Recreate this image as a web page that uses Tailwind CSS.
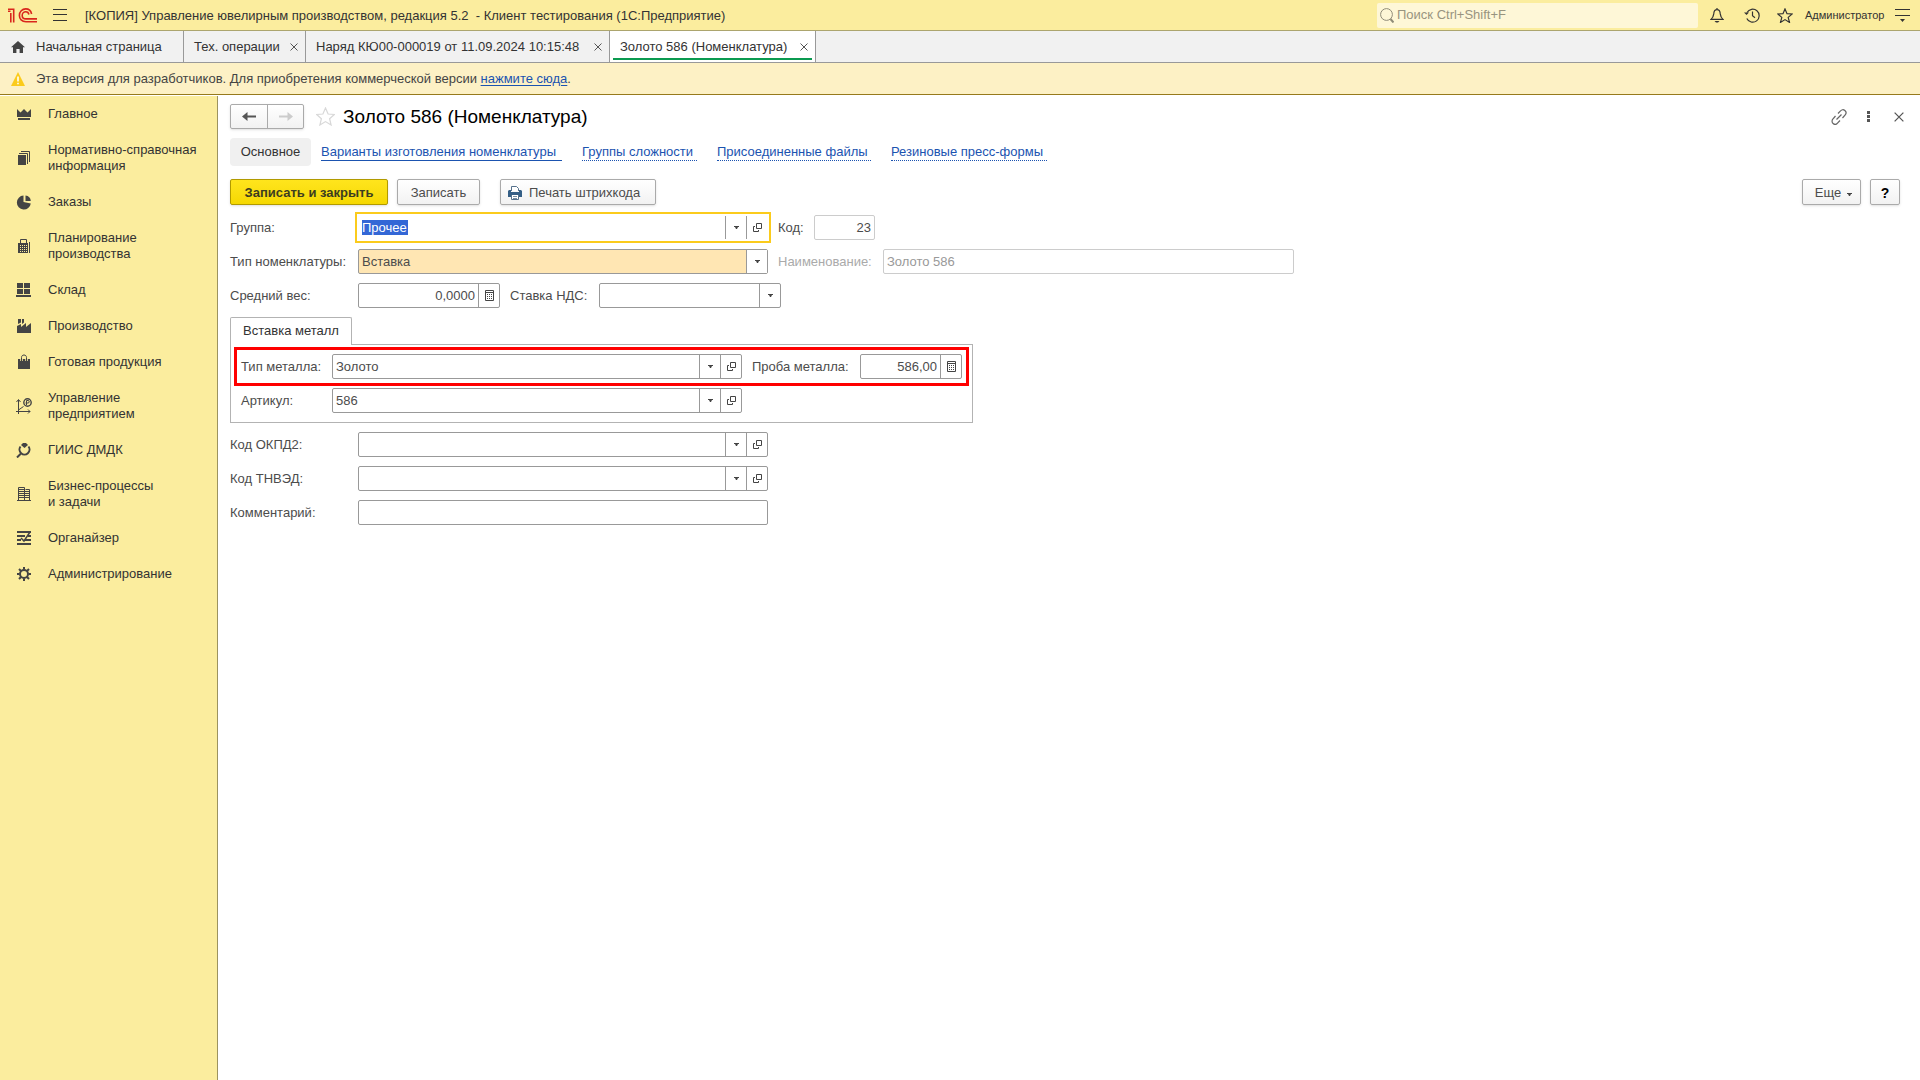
<!DOCTYPE html>
<html lang="ru">
<head>
<meta charset="utf-8">
<title>Золото 586 (Номенклатура)</title>
<script src="https://cdn.jsdelivr.net/npm/@tailwindcss/browser@4"></script>
</head>
<body class="flex min-h-screen flex-col bg-white font-['Liberation_Sans',Arial,sans-serif] text-[13px] leading-4 text-[#333]">
<svg class="hidden">
  <symbol id="drop" viewBox="0 0 5 3"><path d="M0 0h5v1H4L3 3H2L1 1H0z" fill="#444"/></symbol>
  <symbol id="open" viewBox="0 0 9 9"><path d="M3.5.5h5v5h-5zM2 3.5H.5v5h5V7" fill="none" stroke="#444"/></symbol>
  <symbol id="calc" viewBox="0 0 9 11"><path d="M.5.5h8v10h-8zM0 2.5h9" fill="none" stroke="#444"/><path d="M2 4h1v1H2zM4 4h1v1H4zM6 4h1v1H6zM2 6h1v1H2zM4 6h1v1H4zM6 6h1v1H6zM2 8h1v1H2zM4 8h1v1H4zM6 8h1v1H6z" fill="#444"/></symbol>
  <symbol id="x" viewBox="0 0 8 8"><path d="M.5.5l7 7M7.5.5l-7 7" fill="none" stroke="#555"/></symbol>
</svg>

<header class="flex h-[31px] items-center border-b border-[#aca56e] bg-[#fbed9e] pr-[10px] pl-2">
  <svg class="h-[15px] w-[30px] shrink-0" viewBox="0 0 30 15" fill="none" stroke="#d9261c" stroke-width="1.6"><path d="M0 3.200h2.500M2.800 5v9.500M0 1.300h5.700v13.200M29 13.700H18c-4.200 0-6.600-2.800-6.600-6.300C11.400 3.600 14.200.9 17.700.9c3.200 0 5.300 2 5.900 5.100M29 10.900H18c-2.300 0-3.800-1.500-3.800-3.500s1.600-3.600 3.500-3.600c1.700 0 2.900 1 3.200 2.700"/></svg>
  <button aria-label="Меню" class="ml-[15px] shrink-0"><svg class="h-3 w-[14px]" viewBox="0 0 14 12" stroke="#333"><path d="M0 .5h14M0 5.500h14M0 11.500h14"/></svg></button>
  <div class="ml-[18px] flex-1 pt-px whitespace-pre">[КОПИЯ] Управление ювелирным производством, редакция 5.2  - Клиент тестирования (1С:Предприятие)</div>
  <label class="flex h-[25px] w-[321px] items-center rounded-xs bg-[#fef7d7] pl-[3px]">
    <svg class="h-[15px] w-[14px]" viewBox="0 0 14 15" fill="none" stroke="#8f8b78"><circle cx="6.500" cy="6.500" r="5.900"/><path d="M10.500 11l3 3.500" stroke-width="2"/></svg>
    <input type="text" aria-label="Поиск" placeholder="Поиск Ctrl+Shift+F" class="ml-[3px] flex-1 bg-transparent outline-none placeholder:text-[#98947f]">
  </label>
  <button aria-label="Уведомления" class="ml-3"><svg class="h-[15px] w-[14px]" viewBox="0 0 14 15" fill="none" stroke="#333" stroke-width="1.200"><path d="M7 0v1.500M1 11.400c2.500-2 2.500-3.500 2.800-6C4 3 5.200 1.600 7 1.600s3 1.400 3.200 3.800c.3 2.500.3 4 2.800 6z"/><path d="M4.500 13h5L8 14.500H6z" fill="#333" stroke="none"/></svg></button>
  <button aria-label="История" class="ml-5"><svg class="h-[15px] w-4" viewBox="0 0 16 15" fill="none" stroke="#333" stroke-width="1.200"><path d="M3 4.500a6.500 6.500 0 1 1-.2 6M8.500 3.500v4.300l2.500 2"/><path d="M0 4.500h5L2.500 7z" fill="#333" stroke="none"/></svg></button>
  <button aria-label="Избранное" class="ml-[17px]"><svg class="h-[15px] w-4" viewBox="0 0 16 15" fill="none" stroke="#333" stroke-width="1.200"><path d="M8 .9l2 4.800 5.200.3-4 3.400 1.300 5L8 11.600l-4.500 2.800 1.300-5L.8 6 6 5.700z"/></svg></button>
  <span class="ml-3 w-[78px] text-[11px]">Администратор</span>
  <button aria-label="Сервис" class="ml-3"><svg class="h-[13px] w-[15px]" viewBox="0 0 15 13"><path d="M0 .5h15M0 6.500h15" stroke="#333"/><path d="M5 10h5l-2.500 3z" fill="#333"/></svg></button>
</header>

<nav class="flex h-8 border-b border-[#999] bg-[#f1f1f1]">
  <a href="#" class="flex w-[184px] items-center border-r border-[#999] pl-[11px]"><svg class="mr-[11px] h-3 w-[14px]" viewBox="0 0 14 12" fill="#444"><path d="M7 0l7 6.300h-2V12H8.600V8H5.400v4H2V6.300H0z"/></svg>Начальная страница</a>
  <a href="#" class="flex w-[122px] items-center justify-between border-r border-[#999] pr-[7px] pl-[10px]">Тех. операции<svg class="size-2"><use href="#x"/></svg></a>
  <a href="#" class="flex w-[304px] items-center justify-between border-r border-[#999] pr-[7px] pl-[10px]">Наряд КЮ00-000019 от 11.09.2024 10:15:48<svg class="size-2"><use href="#x"/></svg></a>
  <a href="#" class="flex w-[206px] border-r border-[#999] bg-white px-[3px] pb-[2px]"><span class="flex flex-1 items-center justify-between border-b-2 border-[#0b9a50] pt-1 pr-[4px] pl-[7px]">Золото 586 (Номенклатура)<svg class="size-2"><use href="#x"/></svg></span></a>
</nav>

<div class="flex h-8 items-center border-b border-[#967a1c] bg-[#fdf1c5] pl-[11px] text-[#444]">
  <svg class="mr-[11px] h-[14px] w-[14px]" viewBox="0 0 14 14"><path d="M7 0l7 14H0z" fill="#fbcb1c"/><path d="M6.200 4.500h1.600v5H6.200zM6.200 10.800h1.600v1.500H6.200z" fill="#fff"/></svg>
  <p>Эта версия для разработчиков. Для приобретения коммерческой версии <a href="#" class="text-[#1b53b0] underline underline-offset-2">нажмите сюда</a>.</p>
</div>

<div class="flex flex-1 pt-px">
  <aside class="w-[218px] shrink-0 border-r border-[#9c935f] bg-[#fbed9e]">
    <ul>
      <li><a href="#" class="flex items-center gap-4 py-[10px] pl-4"><svg class="size-4" viewBox="0 0 16 16" fill="#444"><path d="M1 3l3.500 3.500L8 3l3.500 3.500L15 3v8H1zM2 12h12v2H2z"/></svg>Главное</a></li>
      <li><a href="#" class="flex items-center gap-4 py-[10px] pl-4"><svg class="size-4" viewBox="0 0 16 16"><path d="M2 5h8v10H2z" fill="#444"/><path d="M3 3.500h8.500V14M5 1.500h8.500V12" fill="none" stroke="#444"/></svg><span>Нормативно-справочная<br>информация</span></a></li>
      <li><a href="#" class="flex items-center gap-4 py-[10px] pl-4"><svg class="size-4" viewBox="0 0 16 16" fill="#444"><path d="M7.500 1.500V8l7.300 1.500A7 7 0 1 1 7.500 1.500zM9.500 1.500A6 6 0 0 1 14.800 7H9.500z"/></svg>Заказы</a></li>
      <li><a href="#" class="flex items-center gap-4 py-[10px] pl-4"><svg class="size-4" viewBox="0 0 16 16"><path d="M4.500 5V1.500h6V5M13.500 4v11" fill="none" stroke="#444"/><path d="M2 5h10v10H2z" fill="#444"/><path d="M4 7.500h7M4 9.500h7M4 11.500h7M4 13.500h7" stroke="#fbed9e" stroke-dasharray="1 1"/></svg><span>Планирование<br>производства</span></a></li>
      <li><a href="#" class="flex items-center gap-4 py-[10px] pl-4"><svg class="size-4" viewBox="0 0 16 16" fill="#444"><path d="M1 1h6v5H1zM8 1h6v5H8zM1 7h6v5H1zM8 7h6v5H8zM0 13h15v2H0z"/></svg>Склад</a></li>
      <li><a href="#" class="flex items-center gap-4 py-[10px] pl-4"><svg class="size-4" viewBox="0 0 16 16" fill="#444"><path d="M1 15V8l4-2v3l5-4v4l5-4v10zM2 1h3v3.500L2 6zM6 1h2v3.500L6 6z"/></svg>Производство</a></li>
      <li><a href="#" class="flex items-center gap-4 py-[10px] pl-4"><svg class="size-4" viewBox="0 0 16 16"><path d="M2 5h12v10H2z" fill="#444"/><path d="M5.500 7V3.500C5.500 2 6.500 1 8 1s2.500 1 2.500 2.500V7" fill="none" stroke="#fbed9e" stroke-width="2.500"/><path d="M5.500 7V3.500C5.500 2 6.500 1 8 1s2.500 1 2.500 2.500V7" fill="none" stroke="#444"/></svg>Готовая продукция</a></li>
      <li><a href="#" class="flex items-center gap-4 py-[10px] pl-4"><svg class="size-4" viewBox="0 0 16 16" fill="none" stroke="#444"><path d="M2.500 16V2M0 13.500h14M2.500 12l5-3.500M.5 4l2-2.500 2 2.500M12 11.500l2 2-2 2"/><circle cx="11.500" cy="4.500" r="3.700" stroke-width="1.400"/><path d="M10.500 7V2.500h1.500a1 1 0 0 1 0 2.500H9.500"/></svg><span>Управление<br>предприятием</span></a></li>
      <li><a href="#" class="flex items-center gap-4 py-[10px] pl-4"><svg class="size-4" viewBox="0 0 16 16"><path d="M5 3l2-2h3l2 2-3.500 3z" fill="#444"/><path d="M4.500 4.500A5 5 0 1 0 12.500 4.500M4.500 12L1 15.500" fill="none" stroke="#444" stroke-width="2"/></svg>ГИИС ДМДК</a></li>
      <li><a href="#" class="flex items-center gap-4 py-[10px] pl-4"><svg class="size-4" viewBox="0 0 16 16" fill="none" stroke="#444"><path d="M2.500 15V1.500h6V15M9.500 3.500h4V15M1 14.500h14M2 3.500h6M2 5.500h6M2 7.500h6M2 9.500h6M2 11.500h6M9 5.500h4M9 7.500h4M9 9.500h4M9 11.500h4"/></svg><span>Бизнес-процессы<br>и задачи</span></a></li>
      <li><a href="#" class="flex items-center gap-4 py-[10px] pl-4"><svg class="size-4" viewBox="0 0 16 16" fill="none" stroke="#444"><path d="M1 2h14M1 6h8M12 6h3M1 10h4M9 10h6M1 14h14" stroke-width="2"/><path d="M14 2l-6 9-3-3" stroke-width="1.500"/></svg>Органайзер</a></li>
      <li><a href="#" class="flex items-center gap-4 py-[10px] pl-4"><svg class="size-4" viewBox="0 0 16 16" fill="none" stroke="#444"><circle cx="8" cy="8" r="4" stroke-width="2"/><path d="M8 1v2.500M8 12.500V15M1 8h2.500M12.500 8H15M3 3l2 2M11 11l2 2M13 3l-2 2M5 11l-2 2" stroke-width="2"/></svg>Администрирование</a></li>
    </ul>
  </aside>

  <main class="flex-1 px-3 pt-2 text-[#4c4c4c]">
    <div class="flex items-center pr-1">
      <div class="flex h-[25px] rounded-xs border border-[#aaa] bg-linear-to-b from-white to-[#f2f2f2] shadow-sm">
        <button aria-label="Назад" class="flex w-[37px] items-center justify-center border-r border-[#aaa]"><svg class="h-[9px] w-[14px]" viewBox="0 0 14 9"><path d="M14 4.500H4" stroke="#555" stroke-width="2"/><path d="M0 4.500L5.500 0v9z" fill="#555"/></svg></button>
        <button aria-label="Вперед" class="flex w-[35px] items-center justify-center"><svg class="h-[9px] w-[14px]" viewBox="0 0 14 9"><path d="M0 4.500h10" stroke="#ccc" stroke-width="2"/><path d="M14 4.500L8.500 0v9z" fill="#ccc"/></svg></button>
      </div>
      <button aria-label="В избранное" class="ml-3"><svg class="size-[19px]" viewBox="0 0 19 19"><path d="M9.500 1l2.600 6 6.200.5-4.700 4.200 1.500 6.300-5.600-3.400L3.900 18l1.500-6.300L.7 7.500 6.900 7z" fill="none" stroke="#d8d8d8" stroke-width="1.200"/></svg></button>
      <h1 class="ml-2 flex-1 text-[19px] leading-6 text-black">Золото 586 (Номенклатура)</h1>
      <button aria-label="Ссылка"><svg class="size-4" viewBox="0 0 16 16" fill="none" stroke="#666" stroke-width="1.200"><path d="M7 4.500l2.500-2.700a3 3 0 0 1 4.700 4L11.500 9M9 11.500l-2.500 2.700a3 3 0 0 1-4.700-4L4.500 7M5.500 10.500l5-5"/></svg></button>
      <button aria-label="Еще действия" class="ml-5"><svg class="h-[11px] w-[3px]" viewBox="0 0 3 11" fill="#555"><path d="M0 0h3v3H0zM0 4h3v3H0zM0 8h3v3H0z"/></svg></button>
      <button aria-label="Закрыть" class="ml-6"><svg class="size-[10px]"><use href="#x"/></svg></button>
    </div>

    <nav class="mt-[9px] flex h-7 items-center gap-5">
      <a href="#" class="-mr-[10px] flex h-7 w-[81px] items-center justify-center rounded-sm bg-[#f0f0f0] text-[#333]">Основное</a>
      <a href="#" class="w-[241px] border-b border-[#1b53b0] text-[#1b53b0]">Варианты изготовления номенклатуры</a>
      <a href="#" class="w-[115px] border-b border-dotted border-[#1b53b0] text-[#1b53b0]">Группы сложности</a>
      <a href="#" class="w-[154px] border-b border-dotted border-[#1b53b0] text-[#1b53b0]">Присоединенные файлы</a>
      <a href="#" class="w-[156px] border-b border-dotted border-[#1b53b0] text-[#1b53b0]">Резиновые пресс-формы</a>
    </nav>

    <div class="mt-[13px] flex h-[26px] pr-2">
      <button class="w-[158px] rounded-xs border border-[#b19a00] bg-linear-to-b from-[#ffe51c] to-[#f5d800] pt-px font-bold text-[#3d3d20] shadow-sm">Записать и закрыть</button>
      <button class="ml-[9px] w-[83px] rounded-xs border border-[#aaa] bg-linear-to-b from-white to-[#f2f2f2] pt-px shadow-sm">Записать</button>
      <button class="ml-5 flex w-[156px] items-center gap-[7px] rounded-xs border border-[#aaa] bg-linear-to-b from-white to-[#f2f2f2] pt-px pl-[7px] shadow-sm"><svg class="h-[14px] w-[14px]" viewBox="0 0 14 14"><path d="M3.500 5V.5h5l2 2V5M3.500 9v4.500h7V9" fill="#fff" stroke="#55718c"/><path d="M1 4h2v2h8V4h2l1 1v6h-3V9H3v2H0V5z" fill="#355f86"/><path d="M5 10.500h4M5 12.500h4" stroke="#55718c" stroke-width=".8"/></svg>Печать штрихкода</button>
      <button class="ml-auto flex w-[59px] items-center justify-center gap-[6px] rounded-xs border border-[#aaa] bg-linear-to-b from-white to-[#f2f2f2] pt-px pl-1 shadow-sm">Еще<svg class="mt-1 h-[3px] w-[5px]"><use href="#drop"/></svg></button>
      <button class="ml-[9px] w-[30px] rounded-xs border border-[#aaa] bg-linear-to-b from-white to-[#f2f2f2] pt-px text-[14px] font-bold text-black shadow-sm">?</button>
    </div>

    <form>
      <div class="mt-[7px] flex h-[31px] items-center">
        <label for="group" class="w-[125px]">Группа:</label>
        <div class="flex h-[31px] w-[416px] border-2 border-[#fbcb1c] py-[2px] pr-[2px]">
          <input id="group" type="text" value="Прочее" class="ml-[5px] h-[15px] w-[46px] self-center bg-[#3367d6] text-white outline-none">
          <button type="button" aria-label="Выбрать" class="ml-auto flex w-[21px] items-center justify-center border-l border-[#999]"><svg class="h-[3px] w-[5px]"><use href="#drop"/></svg></button>
          <button type="button" aria-label="Открыть" class="flex w-[21px] items-center justify-center border-l border-[#999]"><svg class="size-[9px]"><use href="#open"/></svg></button>
        </div>
        <label for="code" class="ml-[7px] w-9">Код:</label>
        <input id="code" type="text" value="23" class="h-[25px] w-[61px] rounded-xs border border-[#ccc] pr-[3px] text-right outline-none">
      </div>

      <div class="mt-[6px] flex items-center">
        <label for="kind" class="w-32 whitespace-nowrap">Тип номенклатуры:</label>
        <div class="relative h-[25px] w-[410px]">
          <select id="kind" class="h-[25px] w-full appearance-none rounded-xs border border-[#999] bg-[#ffe6b3] pl-[3px] outline-none"><option>Вставка</option></select>
          <span class="pointer-events-none absolute top-px right-px flex h-[23px] w-[21px] items-center justify-center border-l border-[#999] bg-white"><svg class="h-[3px] w-[5px]"><use href="#drop"/></svg></span>
        </div>
        <label for="name" class="ml-[10px] w-[105px] text-[#aaa]">Наименование:</label>
        <input id="name" type="text" value="Золото 586" class="h-[25px] w-[411px] rounded-xs border border-[#ccc] pl-[3px] text-[#999] outline-none">
      </div>

      <div class="mt-[9px] flex items-center">
        <label for="weight" class="w-32">Средний вес:</label>
        <div class="flex h-[25px] w-[142px] rounded-xs border border-[#999]">
          <input id="weight" type="text" value="0,0000" class="min-w-0 flex-1 pr-[3px] text-right outline-none">
          <button type="button" aria-label="Калькулятор" class="flex w-[21px] items-center justify-center border-l border-[#999]"><svg class="h-[11px] w-[9px]"><use href="#calc"/></svg></button>
        </div>
        <label for="vat" class="ml-[10px] w-[89px]">Ставка НДС:</label>
        <div class="relative h-[25px] w-[182px]">
          <select id="vat" class="h-[25px] w-full appearance-none rounded-xs border border-[#999] bg-white pl-[3px] outline-none"><option></option></select>
          <span class="pointer-events-none absolute top-px right-px flex h-[23px] w-[21px] items-center justify-center border-l border-[#999]"><svg class="h-[3px] w-[5px]"><use href="#drop"/></svg></span>
        </div>
      </div>

      <div class="mt-[9px] flex">
        <button type="button" class="z-10 -mb-px h-[28px] w-[122px] rounded-t-xs border border-b-0 border-[#b3b3b3] bg-white pb-[2px] text-[#333]">Вставка металл</button>
      </div>
      <section class="w-[743px] border border-[#b3b3b3] pt-[2px] pr-[3px] pb-[9px] pl-[3px]">
        <div class="flex items-center border-3 border-[#ff0000] px-1 py-[4px]">
          <label for="metal" class="w-[91px]">Тип металла:</label>
          <div class="flex h-[25px] w-[410px] rounded-xs border border-[#999]">
            <input id="metal" type="text" value="Золото" class="min-w-0 flex-1 pl-[3px] outline-none">
            <button type="button" aria-label="Выбрать" class="flex w-[21px] items-center justify-center border-l border-[#999]"><svg class="h-[3px] w-[5px]"><use href="#drop"/></svg></button>
            <button type="button" aria-label="Открыть" class="flex w-[21px] items-center justify-center border-l border-[#999]"><svg class="size-[9px]"><use href="#open"/></svg></button>
          </div>
          <label for="probe" class="ml-[10px] w-[108px]">Проба металла:</label>
          <div class="flex h-[25px] w-[102px] rounded-xs border border-[#999]">
            <input id="probe" type="text" value="586,00" class="min-w-0 flex-1 pr-[3px] text-right outline-none">
            <button type="button" aria-label="Калькулятор" class="flex w-[21px] items-center justify-center border-l border-[#999]"><svg class="h-[11px] w-[9px]"><use href="#calc"/></svg></button>
          </div>
        </div>
        <div class="mt-[2px] flex items-center pl-[7px]">
          <label for="article" class="w-[91px]">Артикул:</label>
          <div class="flex h-[25px] w-[410px] rounded-xs border border-[#999]">
            <input id="article" type="text" value="586" class="min-w-0 flex-1 pl-[3px] outline-none">
            <button type="button" aria-label="Выбрать" class="flex w-[21px] items-center justify-center border-l border-[#999]"><svg class="h-[3px] w-[5px]"><use href="#drop"/></svg></button>
            <button type="button" aria-label="Открыть" class="flex w-[21px] items-center justify-center border-l border-[#999]"><svg class="size-[9px]"><use href="#open"/></svg></button>
          </div>
        </div>
      </section>

      <div class="mt-[9px] flex flex-col gap-[9px]">
        <div class="flex items-center">
          <label for="okpd" class="w-32">Код ОКПД2:</label>
          <div class="flex h-[25px] w-[410px] rounded-xs border border-[#999]">
            <input id="okpd" type="text" class="min-w-0 flex-1 pl-[3px] outline-none">
            <button type="button" aria-label="Выбрать" class="flex w-[21px] items-center justify-center border-l border-[#999]"><svg class="h-[3px] w-[5px]"><use href="#drop"/></svg></button>
            <button type="button" aria-label="Открыть" class="flex w-[21px] items-center justify-center border-l border-[#999]"><svg class="size-[9px]"><use href="#open"/></svg></button>
          </div>
        </div>
        <div class="flex items-center">
          <label for="tnved" class="w-32">Код ТНВЭД:</label>
          <div class="flex h-[25px] w-[410px] rounded-xs border border-[#999]">
            <input id="tnved" type="text" class="min-w-0 flex-1 pl-[3px] outline-none">
            <button type="button" aria-label="Выбрать" class="flex w-[21px] items-center justify-center border-l border-[#999]"><svg class="h-[3px] w-[5px]"><use href="#drop"/></svg></button>
            <button type="button" aria-label="Открыть" class="flex w-[21px] items-center justify-center border-l border-[#999]"><svg class="size-[9px]"><use href="#open"/></svg></button>
          </div>
        </div>
        <div class="flex items-center">
          <label for="comment" class="w-32">Комментарий:</label>
          <input id="comment" type="text" class="h-[25px] w-[410px] rounded-xs border border-[#999] pl-[3px] outline-none">
        </div>
      </div>
    </form>
  </main>
</div>
</body>
</html>
